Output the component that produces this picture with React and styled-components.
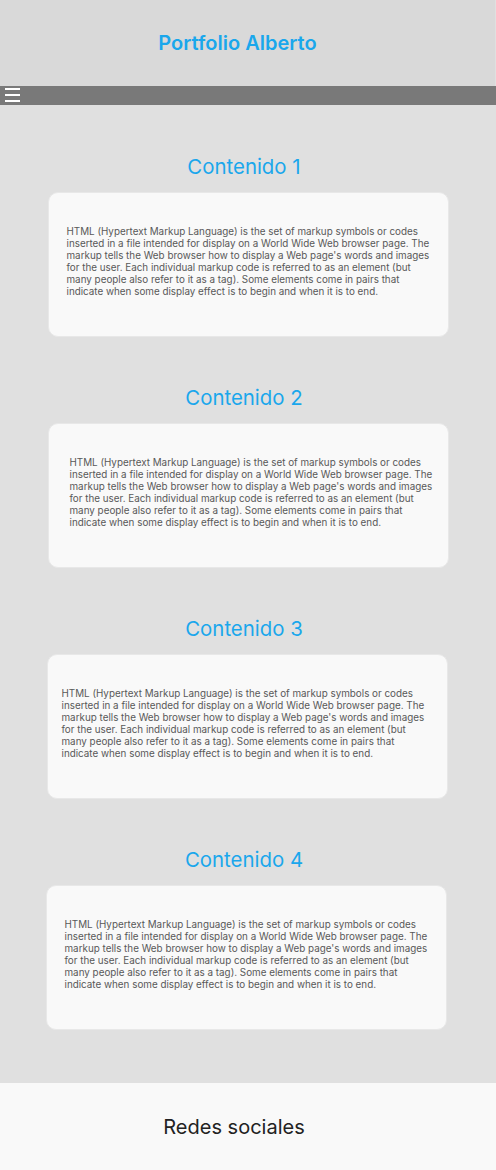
import React from "react";
import styled, { createGlobalStyle } from "styled-components";

const GlobalStyle = createGlobalStyle`
  body {
    margin: 0;
    font-family: Inter, "Noto Sans", sans-serif;
    background: #e0e0e0;
  }
`;

const Header = styled.header`
  box-sizing: border-box;
  height: 86px;
  background: #d9d9d9;
  border-right: 1px solid #e0e0e0;
  display: flex;
  align-items: center;
  justify-content: center;
  padding-right: 20px;

  h1 {
    margin: 0;
    font-size: 20px;
    font-weight: 600;
    color: #1aa7ec;
  }
`;

const NavBar = styled.nav`
  box-sizing: border-box;
  height: 19px;
  background: #797979;
  display: flex;
  align-items: flex-start;
  padding: 2px 0 0 5px;

  .hamburger {
    width: 15px;
    height: 14px;
    display: flex;
    flex-direction: column;
    justify-content: space-between;
    .ham-item {
      height: 2px;
      background: #ffffff;
    }
  }
`;

const Main = styled.main`
  display: flex;
  flex-direction: column;
  align-items: center;
  gap: 49px;
  padding: 50px 0 53px;
`;

const Section = styled.section`
  width: 401px;
  display: flex;
  flex-direction: column;
  align-items: center;
  gap: 13px;

  h2 {
    margin: 0 8px 0 0;
    font-size: 20.4px;
    line-height: 24px;
    font-weight: 400;
    color: #1aa7ec;
  }
`;

const Card = styled.div`
  box-sizing: border-box;
  width: 401px;
  height: 145px;
  margin-left: ${(p) => p.shift * 2}px;
  background: #f9f9f9;
  border: 1px solid #e8e8e8;
  border-radius: 10px;
  display: flex;
  align-items: center;
  padding: 0 0 8px ${(p) => p.pad}px;

  p {
    margin: 0;
    width: 370px;
    font-size: 9.86px;
    line-height: 12px;
    color: #585858;
  }
`;

const Footer = styled.footer`
  height: 87px;
  background: #f9f9f9;
  display: flex;
  align-items: center;
  justify-content: center;
  padding-right: 28px;

  span {
    font-size: 20px;
    color: #222222;
  }
`;

const text =
  "HTML (Hypertext Markup Language) is the set of markup symbols or codes inserted in a file intended for display on a World Wide Web browser page. The markup tells the Web browser how to display a Web page's words and images for the user. Each individual markup code is referred to as an element (but many people also refer to it as a tag). Some elements come in pairs that indicate when some display effect is to begin and when it is to end.";

const sections = [
  { title: "Contenido 1", shift: 0, pad: 18 },
  { title: "Contenido 2", shift: 0, pad: 21 },
  { title: "Contenido 3", shift: -1, pad: 14 },
  { title: "Contenido 4", shift: -2, pad: 18 },
];

export default function App() {
  return (
    <>
      <GlobalStyle />
      <Header>
        <h1>Portfolio Alberto</h1>
      </Header>
      <NavBar>
        <div className="hamburger">
          <div className="ham-item"></div>
          <div className="ham-item"></div>
          <div className="ham-item"></div>
        </div>
      </NavBar>
      <Main>
        {sections.map((s) => (
          <Section key={s.title}>
            <h2>{s.title}</h2>
            <Card pad={s.pad} shift={s.shift}>
              <p>{text}</p>
            </Card>
          </Section>
        ))}
      </Main>
      <Footer>
        <span>Redes sociales</span>
      </Footer>
    </>
  );
}
